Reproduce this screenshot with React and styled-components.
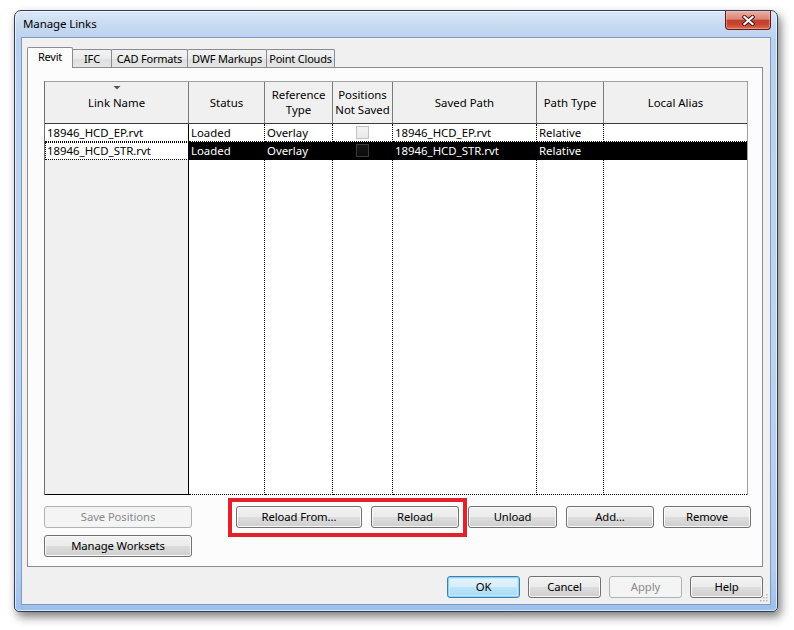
import React from "react";
import styled, { createGlobalStyle, css } from "styled-components";

const GlobalStyle = createGlobalStyle`
  html, body { margin: 0; padding: 0; background: #ffffff; }
  body { font-family: "Noto Sans", "Open Sans", sans-serif; font-size: 11px; color: #000; }
  * { box-sizing: border-box; }
`;

const Page = styled.div`
  width: 794px;
  height: 630px;
  padding: 10px 0 0 14px;
  overflow: hidden;
`;

const Window = styled.div`
  width: 764px;
  height: 602px;
  display: flex;
  flex-direction: column;
  border: 1px solid #2d3f5c;
  border-radius: 7px 7px 5px 5px;
  padding: 0 6px 6px 6px;
  background: linear-gradient(
    to bottom,
    #dde8f6 0px,
    #c7daf1 14px,
    #bad1ed 30px,
    #bfd4ee 300px,
    #b4cdee 560px,
    #9dbfea 100%
  );
  box-shadow: 3px 5px 10px rgba(0, 0, 0, 0.5), inset 0 0 0 1px rgba(255, 255, 255, 0.6);
`;

const TitleBar = styled.div`
  height: 26px;
  display: flex;
  align-items: center;
  padding-left: 2px;
  flex-shrink: 0;
`;

const Title = styled.span`
  font-size: 11.5px;
  color: #000;
  letter-spacing: -0.1px;
  padding-bottom: 1px;
`;

const CloseButton = styled.div`
  align-self: flex-start;
  margin-left: auto;
  width: 46px;
  height: 19px;
  display: flex;
  align-items: center;
  justify-content: center;
  border: 1px solid #5b1c14;
  border-top: none;
  border-radius: 0 0 4px 4px;
  background: linear-gradient(
    to bottom,
    #eab0a3 0%,
    #dc8777 45%,
    #c23f2b 52%,
    #c84531 75%,
    #dc6d52 100%
  );
  box-shadow: inset 0 0 0 1px rgba(255, 200, 190, 0.45);
`;

const Client = styled.div`
  flex: 1;
  position: relative;
  display: flex;
  flex-direction: column;
  border: 1px solid #7f9bc0;
  background: #f0f0f0;
  padding: 9px 7px 6px 5px;
`;

const TabStrip = styled.div`
  height: 20px;
  display: flex;
  align-items: flex-end;
  flex-shrink: 0;
`;

const Tab = styled.div`
  width: ${(p) => p.$w}px;
  height: 18px;
  margin-left: -1px;
  display: flex;
  align-items: center;
  justify-content: center;
  border: 1px solid #898c95;
  border-bottom: none;
  background: linear-gradient(to bottom, #f3f3f3 0%, #ebebeb 50%, #dfdfdf 51%, #e6e6e6 100%);
  border-radius: 2px 2px 0 0;
  white-space: nowrap;
  letter-spacing: -0.2px;
  padding-bottom: 1px;
  &:first-child { margin-left: 0; }
  ${(p) =>
    p.$active &&
    css`
      position: relative;
      z-index: 1;
      height: 21px;
      margin-bottom: -1px;
      background: #fcfcfc;
      padding-bottom: 3px;
    `}
`;

const Panel = styled.div`
  height: 500px;
  flex-shrink: 0;
  border: 1px solid #898c95;
  background: #fcfcfc;
  padding: 13px 14px 0 16px;
  display: flex;
  flex-direction: column;
`;

const Table = styled.div`
  width: 704px;
  height: 414px;
  flex-shrink: 0;
  display: grid;
  grid-template-columns: 144px 76px 68px 60px 144px 67px 143px;
  grid-template-rows: 42px 18px 18px 1fr;
  border-top: 1px solid #a0a0a0;
  border-left: 1px solid #6e6e6e;
  border-right: 1px solid #a0a0a0;
  background: #fff;
  font-size: 11.4px;
`;

const HeaderCell = styled.div`
  position: relative;
  display: flex;
  flex-direction: column;
  align-items: center;
  justify-content: center;
  text-align: center;
  line-height: 15px;
  padding-bottom: 1px;
  background: #f0f0f0;
  border-right: 1px solid #7a7a7a;
  border-bottom: 1px solid #3a3a3a;
  ${(p) => p.$last && css`border-right: none;`}
`;

const SortGlyph = styled.svg`
  position: absolute;
  top: 4px;
  left: 50%;
  margin-left: -4px;
`;

const DataCell = styled.div`
  display: flex;
  align-items: center;
  padding: 0 2px 1px 2px;
  white-space: nowrap;
  overflow: hidden;
  background: #fff;
  color: #000;
  border-right: 1px dotted #000;
  border-bottom: 1px dotted #000;
  ${(p) => p.$center && css`justify-content: center; padding-bottom: 0;`}
  ${(p) => p.$first && css`border-right: 1px solid #000;`}
  ${(p) => p.$last && css`border-right: none;`}
  ${(p) =>
    p.$selected &&
    !p.$first &&
    css`
      background: #000;
      color: #fff;
    `}
  ${(p) =>
    p.$selected &&
    p.$first &&
    css`
      outline: 1px dotted #000;
      outline-offset: -1px;
    `}
`;

const FillerCell = styled.div`
  background: #fff;
  border-right: 1px dotted #000;
  border-bottom: 1px dotted #000;
  ${(p) =>
    p.$first &&
    css`
      background: #f0f0f0;
      border-right: 1px solid #000;
      border-bottom: 1px solid #000;
    `}
  ${(p) => p.$last && css`border-right: none;`}
`;

const Check = styled.span`
  width: 13px;
  height: 13px;
  border: 1px solid #c3c3c3;
  background: linear-gradient(to bottom, #f4f4f4, #e9e9e9);
  ${(p) =>
    p.$dark &&
    css`
      border-color: #3a3a3a;
      background: linear-gradient(to bottom, #151515, #0b0b0b);
    `}
`;

const ButtonArea = styled.div`
  margin-top: 11px;
  display: flex;
  align-items: flex-start;
`;

const LeftColumn = styled.div`
  width: 148px;
  display: flex;
  flex-direction: column;
  gap: 7px;
`;

const ActionRow = styled.div`
  margin-left: 44px;
  display: flex;
  gap: 9px;
`;

const Highlight = styled.div`
  position: relative;
  display: flex;
  gap: 9px;
  &::after {
    content: "";
    position: absolute;
    top: -8px;
    left: -8px;
    right: -8px;
    bottom: -9px;
    border: 4px solid #e3212a;
    pointer-events: none;
  }
`;

const Button = styled.button`
  width: ${(p) => p.$w}px;
  height: 22px;
  padding: 0 0 1px 0;
  font-family: "Noto Sans", "Open Sans", sans-serif;
  font-size: 11.3px;
  color: #000;
  border: 1px solid #707070;
  border-radius: 3px;
  background: linear-gradient(to bottom, #f2f2f2 0%, #ebebeb 50%, #dddddd 51%, #cfcfcf 100%);
  box-shadow: inset 0 0 0 1px #fafafa;
  letter-spacing: -0.1px;
  ${(p) =>
    p.$variant === "disabled" &&
    css`
      color: #8a8a8a;
      border-color: #adb2b5;
      background: #f4f4f4;
      box-shadow: none;
    `}
  ${(p) =>
    p.$variant === "default" &&
    css`
      border-color: #3c7fb1;
      background: linear-gradient(to bottom, #e5f4fc 0%, #d6eefb 50%, #bde4f9 51%, #a9daf6 100%);
      box-shadow: inset 0 0 0 1px #8ed1f5, inset 0 0 0 2px #c9ecfb;
    `}
`;

const Footer = styled.div`
  margin-top: 9px;
  display: flex;
  justify-content: flex-end;
  gap: 8px;
`;

const Grip = styled.svg`
  position: absolute;
  right: 2px;
  bottom: 2px;
`;

const columns = [
  { key: "name", label: ["Link Name"], sort: true },
  { key: "status", label: ["Status"] },
  { key: "type", label: ["Reference", "Type"] },
  { key: "pos", label: ["Positions", "Not Saved"] },
  { key: "path", label: ["Saved Path"] },
  { key: "ptype", label: ["Path Type"] },
  { key: "alias", label: ["Local Alias"] },
];

const rows = [
  { name: "18946_HCD_EP.rvt", status: "Loaded", type: "Overlay", path: "18946_HCD_EP.rvt", ptype: "Relative", alias: "", selected: false },
  { name: "18946_HCD_STR.rvt", status: "Loaded", type: "Overlay", path: "18946_HCD_STR.rvt", ptype: "Relative", alias: "", selected: true },
];

const tabs = [
  { label: "Revit", w: 46, active: true },
  { label: "IFC", w: 40 },
  { label: "CAD Formats", w: 77 },
  { label: "DWF Markups", w: 80 },
  { label: "Point Clouds", w: 69 },
];

export default function App() {
  const last = columns.length - 1;
  return (
    <Page>
      <GlobalStyle />
      <Window>
        <TitleBar>
          <Title>Manage Links</Title>
          <CloseButton>
            <svg width="13" height="11" viewBox="0 0 13 11">
              <path d="M2.5 2 L10.5 9 M10.5 2 L2.5 9" stroke="#4a1510" strokeWidth="4.2" strokeLinecap="square" fill="none" />
              <path d="M2.5 2 L10.5 9 M10.5 2 L2.5 9" stroke="#ffffff" strokeWidth="2.2" strokeLinecap="square" fill="none" />
            </svg>
          </CloseButton>
        </TitleBar>
        <Client>
          <TabStrip>
            {tabs.map((t) => (
              <Tab key={t.label} $w={t.w} $active={t.active}>
                {t.label}
              </Tab>
            ))}
          </TabStrip>
          <Panel>
            <Table>
              {columns.map((c, i) => (
                <HeaderCell key={c.key} $last={i === last}>
                  {c.sort && (
                    <SortGlyph width="8" height="4" viewBox="0 0 8 4">
                      <path d="M0.5 0 L7.5 0 L4 3.5 Z" fill="#555" />
                    </SortGlyph>
                  )}
                  {c.label.map((l) => (
                    <span key={l}>{l}</span>
                  ))}
                </HeaderCell>
              ))}
              {rows.map((r) =>
                columns.map((c, i) => (
                  <DataCell
                    key={r.name + c.key}
                    $first={i === 0}
                    $last={i === last}
                    $center={c.key === "pos"}
                    $selected={r.selected}
                  >
                    {c.key === "pos" ? <Check $dark={r.selected} /> : r[c.key]}
                  </DataCell>
                ))
              )}
              {columns.map((c, i) => (
                <FillerCell key={"f" + c.key} $first={i === 0} $last={i === last} />
              ))}
            </Table>
            <ButtonArea>
              <LeftColumn>
                <Button $w={148} $variant="disabled">Save Positions</Button>
                <Button $w={148}>Manage Worksets</Button>
              </LeftColumn>
              <ActionRow>
                <Highlight>
                  <Button $w={126}>Reload From...</Button>
                  <Button $w={88}>Reload</Button>
                </Highlight>
                <Button $w={89}>Unload</Button>
                <Button $w={88}>Add...</Button>
                <Button $w={88}>Remove</Button>
              </ActionRow>
            </ButtonArea>
          </Panel>
          <Footer>
            <Button $w={73} $variant="default">OK</Button>
            <Button $w={73}>Cancel</Button>
            <Button $w={73} $variant="disabled">Apply</Button>
            <Button $w={73}>Help</Button>
          </Footer>
          <Grip width="8" height="8" viewBox="0 0 8 8">
            <rect x="6" y="0" width="1.5" height="1.5" fill="#b8b8b8" />
            <rect x="3" y="3" width="1.5" height="1.5" fill="#b8b8b8" />
            <rect x="6" y="3" width="1.5" height="1.5" fill="#b8b8b8" />
            <rect x="0" y="6" width="1.5" height="1.5" fill="#b8b8b8" />
            <rect x="3" y="6" width="1.5" height="1.5" fill="#b8b8b8" />
            <rect x="6" y="6" width="1.5" height="1.5" fill="#b8b8b8" />
          </Grip>
        </Client>
      </Window>
    </Page>
  );
}
